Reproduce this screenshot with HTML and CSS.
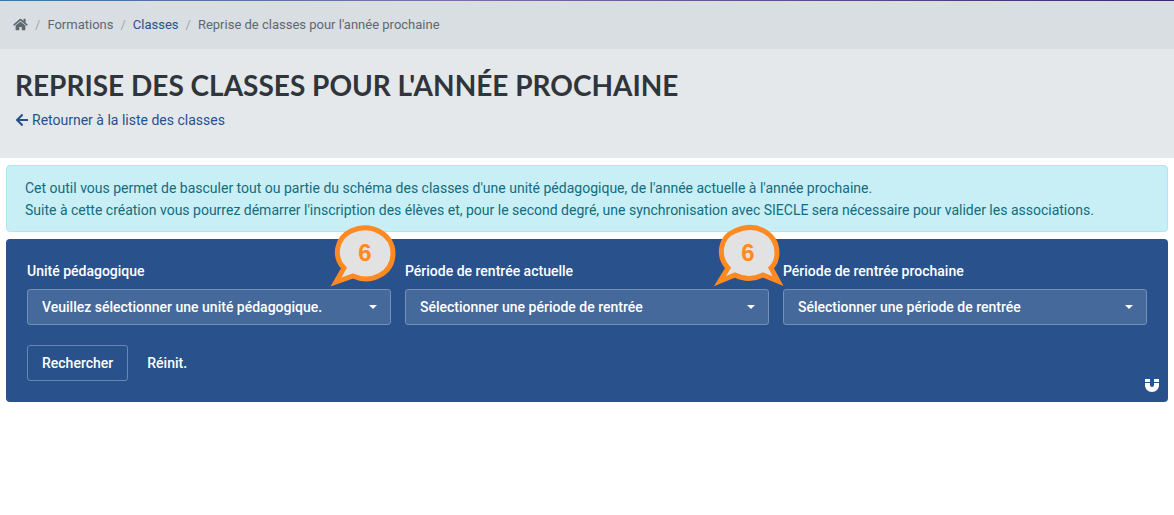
FILE: index.html
```html
<!DOCTYPE html>
<html lang="fr">
<head>
<meta charset="utf-8">
<meta name="viewport" content="width=device-width, initial-scale=1">
<title>Reprise des classes pour l'année prochaine</title>
<link rel="stylesheet" href="styles.css">
</head>
<body>
<nav class="breadcrumb" aria-label="Fil d'Ariane">
  <ol class="breadcrumb-list">
    <li><a class="crumb-home" href="#" aria-label="Accueil"><svg class="icon-home" viewBox="0 0 576 512" aria-hidden="true"><path fill="currentColor" d="M280.4 148.3L96 300.100V464a16 16 0 0 0 16 16l112-.3a16 16 0 0 0 16-16V368a16 16 0 0 1 16-16h64a16 16 0 0 1 16 16v95.600a16 16 0 0 0 16 16l112 .4a16 16 0 0 0 16-16V300L295.700 148.300a12.200 12.200 0 0 0-15.300 0zM571.600 251.500L488 182.600V44a12 12 0 0 0-12-12h-56a12 12 0 0 0-12 12v72.600L318.500 43a48 48 0 0 0-61 0L4.300 251.500a12 12 0 0 0-1.600 16.900l25.500 31a12 12 0 0 0 16.900 1.600L280.400 107.200a12.200 12.200 0 0 1 15.300 0L531 301a12 12 0 0 0 16.900-1.600l25.500-31a12 12 0 0 0-1.800-16.900z"/></svg></a></li>
    <li>Formations</li>
    <li><a class="link" href="#">Classes</a></li>
    <li aria-current="page">Reprise de classes pour l'année prochaine</li>
  </ol>
</nav>
<header class="page-header">
  <h1 class="page-title">Reprise des classes pour l'année prochaine</h1>
  <a class="link back-link" href="#"><svg class="icon-arrow" viewBox="0 0 448 512" aria-hidden="true"><path fill="currentColor" d="M257.500 445.100l-22.200 22.200c-9.400 9.400-24.600 9.400-33.900 0L7 273c-9.400-9.400-9.400-24.600 0-33.900L201.400 44.700c9.400-9.400 24.600-9.400 33.900 0l22.200 22.200c9.500 9.500 9.300 25-.4 34.300L136.600 216H424c13.300 0 24 10.700 24 24v32c0 13.300-10.700 24-24 24H136.600l120.500 114.800c9.800 9.300 10 24.800.4 34.300z"/></svg>Retourner à la liste des classes</a>
</header>
<main class="content">
  <p class="notice">Cet outil vous permet de basculer tout ou partie du schéma des classes d'une unité pédagogique, de l'année actuelle à l'année prochaine.<br>Suite à cette création vous pourrez démarrer l'inscription des élèves et, pour le second degré, une synchronisation avec SIECLE sera nécessaire pour valider les associations.</p>
  <form class="filters">
    <div class="fields">
      <div class="field">
        <label class="field-label" for="unite">Unité pédagogique</label>
        <select class="field-select" id="unite"><option>Veuillez sélectionner une unité pédagogique.</option></select>
        <svg class="callout callout-single" viewBox="0 0 68 64" role="img" aria-label="Repère 6"><path class="bubble" d="M15 43C4 32 7 13 22 6C42 -3 64 9 64 28C64 49 42 59 24 51L7 57Z"/><text class="callout-number" x="36" y="36">6</text></svg>
      </div>
      <div class="field">
        <label class="field-label" for="actuelle">Période de rentrée actuelle</label>
        <select class="field-select" id="actuelle"><option>Sélectionner une période de rentrée</option></select>
        <svg class="callout callout-double" viewBox="0 0 70 64" role="img" aria-label="Repère 6"><path class="bubble" d="M14 43C3 31 6 12 21 6C43 -4 63 9 63 28C63 34 61 39 57 43L64 56L49 50Q35 57 21 50L6 56Z"/><text class="callout-number" x="34" y="36">6</text></svg>
      </div>
      <div class="field">
        <label class="field-label" for="prochaine">Période de rentrée prochaine</label>
        <select class="field-select" id="prochaine"><option>Sélectionner une période de rentrée</option></select>
      </div>
    </div>
    <div class="actions">
      <button class="button button-outline" type="submit">Rechercher</button>
      <button class="button" type="reset">Réinit.</button>
    </div>
    <button class="magnet" type="button" aria-label="Épingler les filtres"><svg class="icon-magnet" viewBox="0 0 14 13" aria-hidden="true"><path fill="currentColor" d="M0 0H5V3H0ZM9 0H14V3H9ZM0 4H5V6Q5 8 7 8T9 6V4H14V6C14 10 11 13 7 13S0 10 0 6Z"/></svg></button>
  </form>
</main>
</body>
</html>
```
FILE: styles.css
```css
* {
  box-sizing: border-box;
}

body {
  margin: 0;
  background: #fff;
  color: #2f353a;
  font-family: Roboto, "Liberation Sans", sans-serif;
  font-size: 14px;
  line-height: 22px;
}

.link {
  color: #28518b;
  text-decoration: none;
}

.breadcrumb {
  padding: 13px 13px 14px;
  background: #d9dee2;
  border-top: 1px solid;
  border-image: linear-gradient(90deg, #3878a4, #7b6fa8 38%, #3c2a70) 1;
  color: #5f686f;
  font-size: 13px;
  line-height: 21px;
}

.breadcrumb-list {
  display: flex;
  flex-wrap: wrap;
  margin: 0;
  padding: 0;
  list-style: none;
}

.breadcrumb-list li + li::before {
  content: "/";
  padding: 0 7px;
  color: #a1a8ae;
}

.crumb-home {
  display: flex;
  align-items: center;
  height: 20px;
  color: #5f686f;
}

.icon-home {
  width: 15px;
  height: 13px;
}

.page-header {
  padding: 18px 15px 27px;
  background: #e4e8eb;
}

.page-title {
  margin: 0 0 5px;
  font-family: Lato, "Open Sans", sans-serif;
  font-size: 28px;
  font-weight: 700;
  line-height: 36px;
  text-transform: uppercase;
}

.back-link {
  display: flex;
  align-items: center;
  gap: 3px;
  width: fit-content;
  height: 23px;
}

.icon-arrow {
  width: 14px;
  height: 14px;
}

.content {
  padding: 7px 6px;
}

.notice {
  margin: 0 0 7px;
  padding: 11px 18px 10px;
  background: #c8eff5;
  border: 1px solid #b0e6ef;
  border-radius: 4px;
  color: #116c80;
}

.filters {
  position: relative;
  padding: 21px;
  background: #29528c;
  border-radius: 4px;
  color: #fff;
  font-weight: 500;
}

.fields {
  display: grid;
  grid-template-columns: repeat(3, 1fr);
  gap: 14px;
}

.field {
  position: relative;
}

.field-label {
  display: block;
  margin-bottom: 7px;
  line-height: 22px;
}

.field-select {
  display: block;
  width: 100%;
  height: 36px;
  padding: 0 30px 0 14px;
  appearance: none;
  background: #45699b url("data:image/svg+xml,%3Csvg xmlns='http://www.w3.org/2000/svg' viewBox='0 0 8 4'%3E%3Cpath fill='%23fff' d='M0 0H8L4 4Z'/%3E%3C/svg%3E") no-repeat right 13px center / 8px 4px;
  border: 1px solid #7390b6;
  border-radius: 3px;
  color: #fff;
  font: inherit;
}

.callout {
  position: absolute;
  top: -35px;
  height: 64px;
  overflow: visible;
}

.callout-single {
  right: -6px;
  width: 68px;
}

.callout-double {
  right: -15px;
  width: 70px;
}

.bubble {
  fill: #e2e2e2;
  stroke: #ff8a22;
  stroke-width: 5;
}

.callout-number {
  fill: #ff8a22;
  font-family: "Liberation Sans", Arial, sans-serif;
  font-size: 24px;
  font-weight: 700;
  text-anchor: middle;
}

.actions {
  display: flex;
  gap: 4px;
  margin-top: 20px;
}

.button {
  height: 36px;
  padding: 0 14px;
  background: transparent;
  border: 1px solid transparent;
  border-radius: 3px;
  color: #fff;
  font: inherit;
}

.button-outline {
  border-color: #6987b2;
}

.magnet {
  position: absolute;
  right: 9px;
  bottom: 10px;
  padding: 0;
  background: none;
  border: 0;
  color: #fff;
}

.icon-magnet {
  display: block;
  width: 14px;
  height: 13px;
}
```
